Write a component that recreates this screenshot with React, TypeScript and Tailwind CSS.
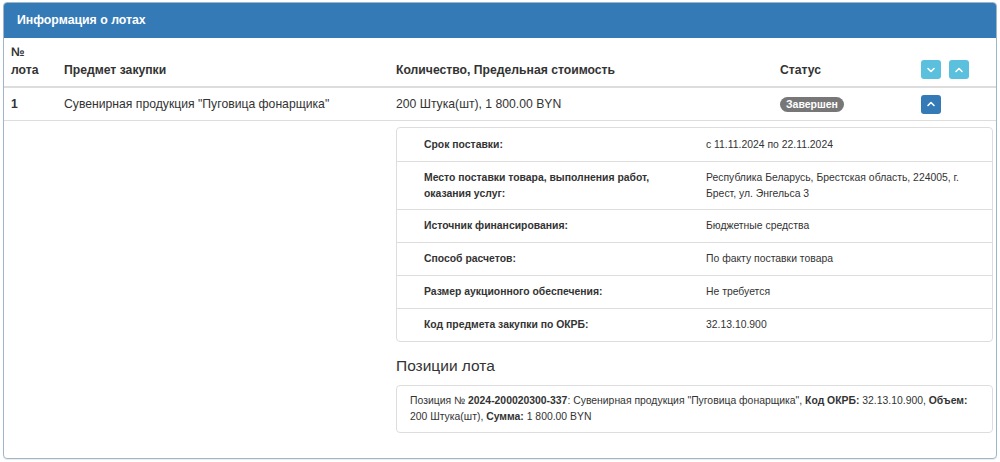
import React from "react";

const Chevron = ({ up }: { up?: boolean }) => (
  <svg width="10" height="10" viewBox="0 0 10 10" fill="none">
    <path d={up ? "M2 6.5 L5 3.5 L8 6.5" : "M2 3.5 L5 6.5 L8 3.5"} stroke="white" strokeWidth="1.6" strokeLinecap="round" strokeLinejoin="round" />
  </svg>
);

const details: [string, React.ReactNode, boolean?][] = [
  ["Срок поставки:", "с 11.11.2024 по 22.11.2024"],
  [
    "Место поставки товара, выполнения работ, оказания услуг:",
    "Республика Беларусь, Брестская область, 224005, г. Брест, ул. Энгельса 3",
    true,
  ],
  ["Источник финансирования:", "Бюджетные средства"],
  ["Способ расчетов:", "По факту поставки товара"],
  ["Размер аукционного обеспечения:", "Не требуется"],
  ["Код предмета закупки по ОКРБ:", "32.13.10.900"],
];

export default function App() {
  return (
    <div
      className="w-[1000px] h-[462px] bg-white pt-[2px] pl-[3px] pr-[3px] text-[#333]"
      style={{ fontFamily: '"Liberation Sans", Arial, sans-serif' }}
    >
      <div className="h-[457px] border border-[#9fb6c9] rounded-[4px] overflow-hidden shadow-[0_1px_1px_rgba(0,0,0,0.08)]">
        <div className="h-[35px] bg-[#337ab7] flex items-center pl-[13px] text-white text-[12.3px] font-bold">
          Информация о лотах
        </div>
        <div className="grid grid-cols-[53px_332px_384px_141px_1fr] text-[12.2px]">
          <div className="pl-[7px] pt-[5px] pb-[7px] font-bold leading-[18px] border-b-2 border-[#ddd] flex flex-col justify-end">
            <span>№</span>
            <span>лота</span>
          </div>
          <div className="pl-[7px] pb-[7px] font-bold leading-[18px] border-b-2 border-[#ddd] flex items-end">Предмет закупки</div>
          <div className="pl-[7px] pb-[7px] font-bold leading-[18px] border-b-2 border-[#ddd] flex items-end">Количество, Предельная стоимость</div>
          <div className="pl-[7px] pb-[7px] font-bold leading-[18px] border-b-2 border-[#ddd] flex items-end">Статус</div>
          <div className="pl-[7px] pb-[7px] border-b-2 border-[#ddd] flex items-end gap-[8px]">
            <button className="w-[20px] h-[19px] shrink-0 rounded-[3px] bg-[#5bc0de] flex items-center justify-center">
              <Chevron />
            </button>
            <button className="w-[20px] h-[19px] shrink-0 rounded-[3px] bg-[#5bc0de] flex items-center justify-center">
              <Chevron up />
            </button>
          </div>

          <div className="pl-[7px] h-[33px] flex items-center font-bold border-b border-[#ddd]">1</div>
          <div className="pl-[7px] h-[33px] flex items-center border-b border-[#ddd]">Сувенирная продукция "Пуговица фонарщика"</div>
          <div className="pl-[7px] h-[33px] flex items-center border-b border-[#ddd]">200 Штука(шт), 1 800.00 BYN</div>
          <div className="pl-[7px] h-[33px] flex items-center border-b border-[#ddd]">
            <span className="bg-[#777] text-white text-[10.5px] font-bold rounded-full px-[6px] leading-[15px]">Завершен</span>
          </div>
          <div className="pl-[7px] h-[33px] flex items-center border-b border-[#ddd]">
            <button className="w-[20px] h-[19px] shrink-0 rounded-[3px] bg-[#337ab7] flex items-center justify-center">
              <Chevron up />
            </button>
          </div>
        </div>

        <div className="ml-[392px] mr-[3px] mt-[6px] text-[10.4px]">
          <div className="border border-[#ddd] rounded-[4px]">
            {details.map(([label, value, tall], i) => (
              <div
                key={i}
                className={`grid grid-cols-[309px_1fr] leading-[16px] ${i > 0 ? "border-t border-[#ddd]" : ""} ${tall ? "h-[48px]" : "h-[33px]"}`}
              >
                <div className="pl-[27px] pr-[20px] font-bold flex items-center">{label}</div>
                <div className="pr-[20px] flex items-center">{value}</div>
              </div>
            ))}
          </div>
          <div className="text-[15.5px] leading-[20px] mt-[14px] mb-[9px]">Позиции лота</div>
          <div className="border border-[#ddd] rounded-[4px] px-[13px] py-[7px] leading-[16px]">
            Позиция № <b>2024-200020300-337</b>: Сувенирная продукция "Пуговица фонарщика", <b>Код ОКРБ:</b> 32.13.10.900, <b>Объем:</b> 200 Штука(шт), <b>Сумма:</b> 1 800.00 BYN
          </div>
        </div>
      </div>
    </div>
  );
}
